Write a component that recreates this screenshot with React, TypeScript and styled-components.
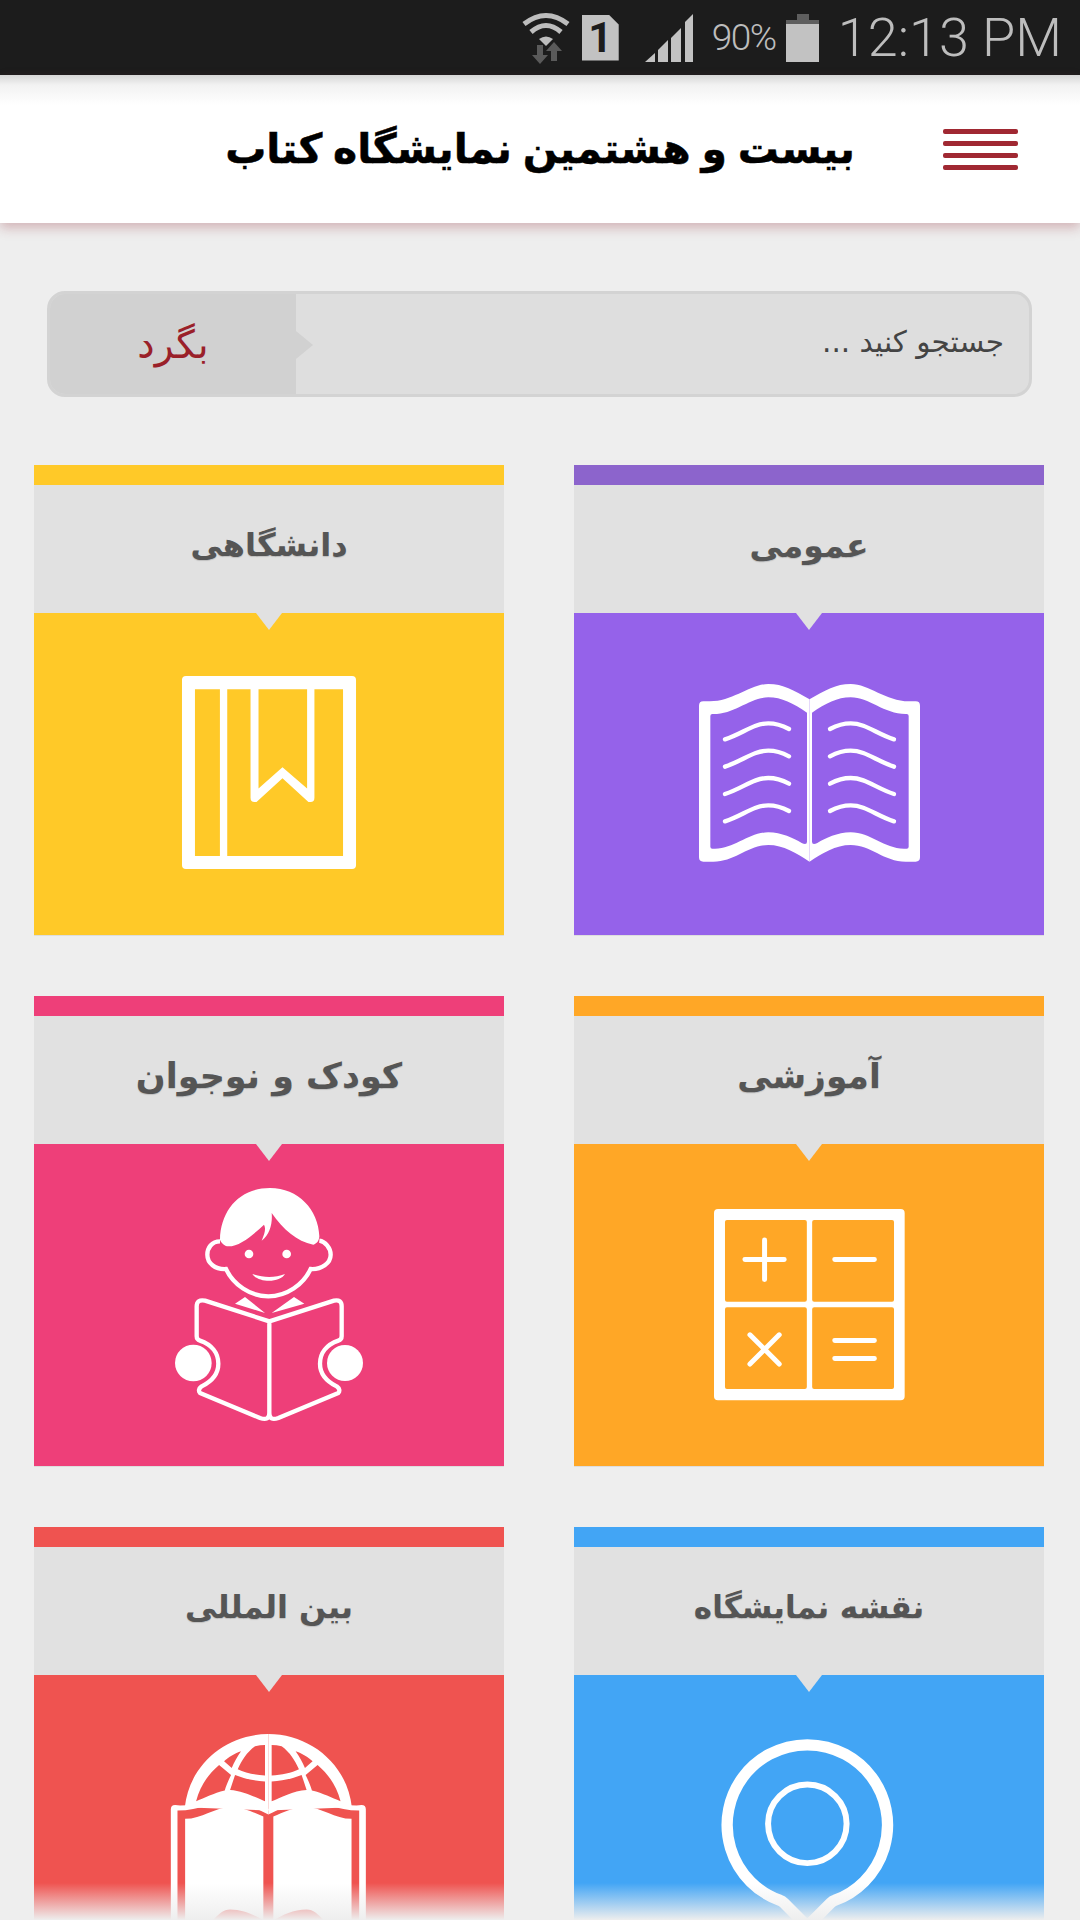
import styled, { createGlobalStyle } from "styled-components";

const GlobalStyle = createGlobalStyle`
  html, body {
    margin: 0;
    padding: 0;
    background: #eeeeee;
  }
  * {
    box-sizing: border-box;
  }
`;

const Screen = styled.div`
  position: relative;
  width: 1080px;
  height: 1920px;
  overflow: hidden;
  background: #eeeeee;
  font-family: "DejaVu Sans", sans-serif;
`;

const StatusBar = styled.div`
  height: 75px;
  background: #1c1c1c;
  display: flex;
  align-items: center;
  justify-content: flex-end;
  padding-right: 18px;
  color: #bdbdbd;
  font-family: Roboto, sans-serif;
  font-weight: 300;
`;

const StatusIcon = styled.svg<{ $gap: number }>`
  display: block;
  margin-left: ${(props) => props.$gap}px;
  flex-shrink: 0;
`;

const SimCard = styled.div`
  width: 37px;
  height: 46px;
  margin-left: 11px;
  background: #c2c2c2;
  clip-path: polygon(0 0, 27px 0, 100% 10px, 100% 100%, 0 100%);
  color: #1c1c1c;
  font-size: 42px;
  font-weight: 700;
  line-height: 46px;
  text-align: center;
`;

const Percent = styled.span`
  font-size: 37px;
  letter-spacing: -1.5px;
  margin-left: 19px;
  width: 65px;
  white-space: nowrap;
`;

const Clock = styled.span`
  font-size: 54px;
  margin-left: 19px;
  white-space: nowrap;
`;

const Header = styled.header`
  position: relative;
  height: 148px;
  background: linear-gradient(#d6d6d6 0, #f2f2f2 10px, #ffffff 30px);
  box-shadow: 0 5px 11px rgba(150, 50, 60, 0.3);
  display: flex;
  align-items: center;
  justify-content: flex-end;
  padding-right: 60px;
  gap: 88px;
`;

const Title = styled.h1`
  margin: 0;
  font-size: 41px;
  font-weight: 700;
  word-spacing: -3.5px;
  color: #000000;
  white-space: nowrap;
  -webkit-text-stroke: 0.5px #000000;
`;

const MenuButton = styled.div`
  width: 75px;
  margin-right: 2px;
  display: flex;
  flex-direction: column;
  gap: 7px;
`;

const MenuLine = styled.span`
  display: block;
  height: 5px;
  border-radius: 2px;
  background: #a02832;
`;

const SearchBar = styled.div`
  margin: 68px 48px 68px 47px;
  height: 106px;
  border: 3px solid #d3d3d3;
  border-radius: 18px;
  background: #dedede;
  display: flex;
  overflow: hidden;
`;

const SearchButton = styled.div`
  position: relative;
  width: 246px;
  background: #d1d1d1;
  color: #9a2029;
  font-size: 39px;
  display: flex;
  align-items: center;
  justify-content: center;

  &::after {
    content: "";
    position: absolute;
    left: 100%;
    top: 37px;
    border-style: solid;
    border-width: 14px 0 14px 17px;
    border-color: transparent transparent transparent #d1d1d1;
  }
`;

const SearchField = styled.div`
  flex: 1;
  display: flex;
  align-items: center;
  padding-right: 25px;
  padding-bottom: 4px;
  font-size: 29.5px;
  color: #444444;
`;

const Grid = styled.div`
  display: grid;
  grid-template-columns: 470px 470px;
  column-gap: 70px;
  row-gap: 60px;
  padding: 0 36px 0 34px;
  direction: rtl;
`;

const Card = styled.div<{ $color: string }>`
  height: 471px;
  background: ${(props) => props.$color};
  border-bottom: 1px solid #dddddd;
  display: flex;
  flex-direction: column;
`;

const Stripe = styled.div<{ $color: string }>`
  height: 20px;
  background: ${(props) => props.$color};
`;

const CardTitle = styled.div<{ $size: number }>`
  position: relative;
  height: 128px;
  background: #e1e1e1;
  color: #555555;
  font-size: ${(props) => props.$size}px;
  font-weight: 700;
  display: flex;
  align-items: center;
  justify-content: center;
  padding-bottom: 8px;
  text-shadow: 0 1px 1px rgba(0, 0, 0, 0.15);

  &::after {
    content: "";
    position: absolute;
    top: 100%;
    left: 50%;
    margin-left: -13px;
    border-style: solid;
    border-width: 17px 13px 0 13px;
    border-color: #e1e1e1 transparent transparent transparent;
  }
`;

const CardBody = styled.div`
  flex: 1;
  display: flex;
  align-items: center;
  justify-content: center;
`;

const Fade = styled.div`
  position: absolute;
  left: 0;
  right: 0;
  bottom: 0;
  height: 37px;
  background: linear-gradient(rgba(238, 238, 238, 0), #eeeeee);
`;

function WifiIcon() {
  return (
    <StatusIcon $gap={0} width="50" height="53" viewBox="0 0 50 53">
      <path d="M3 13Q25 -4 47 13" fill="none" stroke="#bdbdbd" strokeWidth="5" />
      <path d="M10 21Q25 8 40 21" fill="none" stroke="#bdbdbd" strokeWidth="5" />
      <path d="M18 28Q25 23 32 28L25 35Z" fill="#bdbdbd" />
      <path d="M16 34h6v10h5l-8 9l-8-9h5z" fill="#5a5a5a" />
      <path d="M33 31l8 9h-5v10h-6v-10h-5z" fill="#5a5a5a" />
    </StatusIcon>
  );
}

function SignalIcon() {
  return (
    <StatusIcon $gap={26} width="48" height="48" viewBox="0 0 48 48">
      <path d="M0 48L10 39V48Z" fill="#c2c2c2" />
      <path d="M13 36L23 26V48H13Z" fill="#c2c2c2" />
      <path d="M26 24L36 14V48H26Z" fill="#c2c2c2" />
      <path d="M40 8L48 0V48H40Z" fill="#c2c2c2" />
    </StatusIcon>
  );
}

function BatteryIcon() {
  return (
    <StatusIcon $gap={9} width="33" height="48" viewBox="0 0 33 48">
      <rect x="11" y="0" width="12" height="6" fill="#5e5e5e" />
      <rect x="0" y="6" width="33" height="4" fill="#5e5e5e" />
      <rect x="0" y="10" width="33" height="38" fill="#c2c2c2" />
    </StatusIcon>
  );
}

function OpenBookIcon() {
  const half = (
    <>
      <path
        fillRule="evenodd"
        fill="#ffffff"
        d="M448.5 118C400 90 370 72 325 72C270 72 220 124 150 124L130 124Q117 124 117 137L117 592Q117 605 130 605L160 605C225 605 265 555 325 555C370 555 410 580 448.5 605ZM441 158C400 130 365 112 325 112C270 112 225 162 160 162L157 162Q151 162 151 168L151 560Q151 566 157 566L165 566C225 566 265 517 325 517C365 517 400 535 425 549Q441 556 441 545Z"
      />
      {[0, 82, 164, 246].map((dy) => (
        <path
          key={dy}
          d={`M195 ${238 + dy}C250 ${220 + dy} 280 ${190 + dy} 325 ${190 + dy}C350 ${190 + dy} 370 ${198 + dy} 387 ${207 + dy}`}
          fill="none"
          stroke="#ffffff"
          strokeWidth="13"
          strokeLinecap="round"
        />
      ))}
    </>
  );
  return (
    <svg width="221" height="180" viewBox="117 72 663 540">
      {half}
      <g transform="translate(897 0) scale(-1 1)">{half}</g>
    </svg>
  );
}

function BookmarkIcon() {
  return (
    <svg width="177" height="197" viewBox="92 46 530 592">
      <path
        fillRule="evenodd"
        fill="#ffffff"
        d="M106 46H605Q617 46 617 58V614Q617 626 605 626H106Q94 626 94 614V58Q94 46 106 46ZM133 86V587H208V86ZM230 86V587H578V86H492V412Q492 425 480 425H474L396 353L318 425H312Q300 425 300 412V86ZM324 86V384L396 320L470 384V86Z"
      />
    </svg>
  );
}

const cell = (x: number, y: number) =>
  `M${x + 6} ${y}H${x + 240}Q${x + 246} ${y} ${x + 246} ${y + 6}V${y + 240}Q${x + 246} ${y + 246} ${x + 240} ${y + 246}H${x + 6}Q${x} ${y + 246} ${x} ${y + 240}V${y + 6}Q${x} ${y} ${x + 6} ${y}Z`;

function CalculatorIcon() {
  return (
    <svg width="191" height="193" viewBox="70 55 574 580">
      <path
        fillRule="evenodd"
        fill="#ffffff"
        d={`M82 55H631Q643 55 643 67V618Q643 630 631 630H82Q70 630 70 618V67Q70 55 82 55Z${cell(103, 88)}${cell(365, 88)}${cell(103, 350)}${cell(365, 350)}`}
      />
      <path
        d="M163 207H281M222 148V267M433 207H552M178 433L266 521M266 433L178 521M433 450H552M433 504H552"
        fill="none"
        stroke="#ffffff"
        strokeWidth="15"
        strokeLinecap="round"
      />
    </svg>
  );
}

function ReaderIcon() {
  return (
    <svg width="188" height="234" viewBox="75 55 564 702">
      <path
        fill="#ffffff"
        d="M210 210C212 120 270 55 360 55C445 55 505 120 508 200C507 215 500 222 490 225C440 215 400 180 365 130C368 160 360 195 335 213C345 190 348 175 342 165C310 195 270 230 235 230C225 230 215 222 210 210Z"
      />
      <path
        d="M210 215C185 215 172 235 172 255C172 280 195 300 228 298C250 345 300 380 355 380C410 380 460 345 482 298C515 300 542 280 542 255C542 235 525 215 508 213"
        fill="none"
        stroke="#ffffff"
        strokeWidth="13"
      />
      <circle cx="297" cy="253" r="13" fill="#ffffff" />
      <circle cx="410" cy="253" r="13" fill="#ffffff" />
      <path d="M307 313C340 325 375 325 405 313C390 340 325 340 307 313Z" fill="#ffffff" />
      <path d="M255 402L285 382L345 430ZM463 402L432 382L365 430Z" fill="#ffffff" />
      <path
        d="M358 455L165 393Q140 388 140 410L140 500Q140 510 150 513C185 525 205 550 205 582C205 615 185 635 155 650Q142 660 150 670L330 745Q358 755 358 730ZM358 455L552 393Q575 388 575 410L575 500Q575 510 565 513C530 525 510 550 510 582C510 615 530 635 560 650Q573 660 565 670L385 745Q358 755 358 730Z"
        fill="none"
        stroke="#ffffff"
        strokeWidth="13"
        strokeLinejoin="round"
      />
      <circle cx="130" cy="580" r="55" fill="#ffffff" />
      <circle cx="585" cy="580" r="54" fill="#ffffff" />
    </svg>
  );
}

function GlobeBookIcon() {
  const half = (
    <>
      <path
        fillRule="evenodd"
        fill="#ffffff"
        d="M355 70C230 70 118 160 104 290L355 300ZM138 272C150 225 175 190 207 163L243 193C235 210 228 225 224 240C190 248 165 262 138 272ZM222 152C235 140 255 128 273 122C262 138 252 155 245 172ZM345 103V195C315 193 285 187 263 176C275 150 290 125 315 107Q330 103 345 103ZM255 193C285 205 315 211 345 213V272C320 262 280 240 240 238Z"
      />
      <path
        fillRule="evenodd"
        fill="#ffffff"
        d="M355 295C320 275 280 257 240 257C190 257 150 285 90 285L75 283Q62 283 62 296V700H355ZM355 312C320 296 285 272 240 272C195 272 150 300 82 300V700H355Z"
      />
      <path
        fill="#ffffff"
        d="M340 318C310 305 280 290 240 290C195 290 155 325 105 325V660H160C190 630 210 597 240 597C280 597 315 615 340 630Z"
      />
    </>
  );
  return (
    <svg width="198" height="205" viewBox="60 70 594 616">
      {half}
      <g transform="translate(710 0) scale(-1 1)">{half}</g>
    </svg>
  );
}

function PinIcon() {
  return (
    <svg width="178" height="195" viewBox="90 85 534 586">
      <path
        d="M270 570A241 241 0 1 1 434 570Q428 572 422 578L352 648L282 578Q276 572 270 570Z"
        fill="none"
        stroke="#ffffff"
        strokeWidth="34"
        strokeLinejoin="round"
      />
      <circle cx="352" cy="340" r="118" fill="none" stroke="#ffffff" strokeWidth="18" />
    </svg>
  );
}

const categories = [
  { title: "عمومی", size: 33, color: "#9562ea", stripe: "#8c64cc", icon: <OpenBookIcon /> },
  { title: "دانشگاهی", size: 32, color: "#ffc928", stripe: "#ffc928", icon: <BookmarkIcon /> },
  { title: "آموزشی", size: 34.5, color: "#ffa726", stripe: "#ffa726", icon: <CalculatorIcon /> },
  { title: "کودک و نوجوان", size: 35, color: "#ee3f79", stripe: "#ee3f79", icon: <ReaderIcon /> },
  { title: "نقشه نمایشگاه", size: 31, color: "#42a5f5", stripe: "#42a5f5", icon: <PinIcon /> },
  { title: "بین المللی", size: 32, color: "#ef5350", stripe: "#ef5350", icon: <GlobeBookIcon /> },
];

export default function App() {
  return (
    <Screen>
      <GlobalStyle />
      <StatusBar>
        <WifiIcon />
        <SimCard>1</SimCard>
        <SignalIcon />
        <Percent>90%</Percent>
        <BatteryIcon />
        <Clock>12:13 PM</Clock>
      </StatusBar>

      <Header>
        <Title dir="rtl">بیست و هشتمین نمایشگاه کتاب</Title>
        <MenuButton>
          <MenuLine />
          <MenuLine />
          <MenuLine />
          <MenuLine />
        </MenuButton>
      </Header>

      <SearchBar>
        <SearchButton>بگرد</SearchButton>
        <SearchField dir="rtl">جستجو کنید ...</SearchField>
      </SearchBar>

      <Grid>
        {categories.map((category) => (
          <Card key={category.title} $color={category.color}>
            <Stripe $color={category.stripe} />
            <CardTitle $size={category.size}>{category.title}</CardTitle>
            <CardBody>{category.icon}</CardBody>
          </Card>
        ))}
      </Grid>

      <Fade />
    </Screen>
  );
}
